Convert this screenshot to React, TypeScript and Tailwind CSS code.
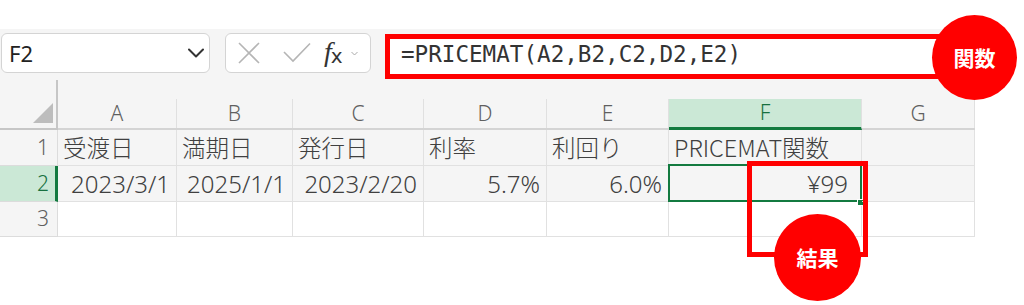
import React from 'react';

const columns = ['A', 'B', 'C', 'D', 'E', 'F', 'G'];

const row1 = ['受渡日', '満期日', '発行日', '利率', '利回り', 'PRICEMAT関数', ''];
const row2 = ['2023/3/1', '2025/1/1', '2023/2/20', '5.7%', '6.0%', '¥99', ''];

const cellFont = { fontFamily: '"Noto Sans CJK JP", "Noto Sans", sans-serif' };
const numFont = { fontFamily: '"Noto Sans", "Noto Sans CJK JP", sans-serif' };

const NameBox = () => (
  <div className="ml-[1px] flex h-[40px] w-[209px] items-center justify-between rounded-[6px] border border-[#d4d4d4] bg-white pl-[7px] pr-[5px]">
    <span className="text-[22px] leading-none text-[#222]" style={{ fontFamily: '"Noto Sans", sans-serif' }}>
      F2
    </span>
    <svg width="16" height="10" viewBox="0 0 16 10" fill="none">
      <path d="M1 1.5L8 8.5L15 1.5" stroke="#333" strokeWidth="2" strokeLinecap="round" strokeLinejoin="round" />
    </svg>
  </div>
);

const FormulaButtons = () => (
  <div className="ml-[15px] flex h-[40px] w-[146px] items-center rounded-[6px] border border-[#d4d4d4] bg-white pl-[12px]">
    <svg width="22" height="22" viewBox="0 0 22 22" fill="none">
      <path d="M1 1L21 21M21 1L1 21" stroke="#b5b5b5" strokeWidth="1.6" />
    </svg>
    <svg className="ml-[23px]" width="28" height="22" viewBox="0 0 28 22" fill="none">
      <path d="M1 10L10 19L27 1.5" stroke="#b5b5b5" strokeWidth="1.6" />
    </svg>
    <span className="ml-[13px] -mt-[2px] flex items-end leading-none text-[#333]" style={{ fontFamily: '"Liberation Serif", serif' }}>
      <span className="text-[28px] italic">f</span>
      <span className="-ml-[1px] text-[20px]" style={{ fontFamily: '"DejaVu Sans", sans-serif' }}>x</span>
    </span>
    <svg className="ml-[8px]" width="7" height="5" viewBox="0 0 7 5" fill="none">
      <path d="M0.5 1L3.5 4L6.5 1" stroke="#aaa" strokeWidth="1" />
    </svg>
  </div>
);

const FormulaBar = () => (
  <div className="ml-[14px] mt-[1px] flex h-[45px] w-[575px] items-center border-[5px] border-[#ff0000] bg-white pl-[11px]">
    <span className="-mt-[4px] text-[22.6px] leading-none text-[#333]" style={{ fontFamily: '"DejaVu Sans Mono", monospace' }}>
      =PRICEMAT(A2,B2,C2,D2,E2)
    </span>
  </div>
);

const Grid = () => (
  <div className="grid grid-cols-[58px_119px_116px_131px_123px_122px_193px_113px] grid-rows-[50px_36px_36px_35px]">
    {/* 全選択 */}
    <div className="flex items-end justify-end border-b-2 border-r-2 border-[#c6c6c6] pb-[5px] pr-[3px]">
      <svg width="20" height="20" viewBox="0 0 20 20">
        <path d="M20 0V20H0Z" fill="#bdbdbd" />
      </svg>
    </div>
    {columns.map((c) => (
      <div key={c} className="flex flex-col border-b-2 border-[#d4d4d4]">
        <div
          className={`mt-[19px] flex h-[29px] items-center justify-center border-r border-[#e0e0e0] text-[21px] font-light leading-none ${
            c === 'F' ? '-mb-[2px] h-[31px] border-b-[3px] border-b-[#137a40] bg-[#cbe8d6] text-[#17703f]' : 'text-[#5f5f5f]'
          }`}
          style={{ fontFamily: '"Noto Sans", sans-serif' }}
        >
          <span className={c === 'F' ? '-mt-[1px]' : ''}>{c}</span>
        </div>
      </div>
    ))}

    {/* 1行目 */}
    <div className="flex items-center justify-end border-b border-r border-[#dcdcdc] pr-[8px] text-[21px] font-light text-[#5f5f5f]" style={{ fontFamily: '"Noto Sans", sans-serif' }}>
      1
    </div>
    {row1.map((v, i) => (
      <div key={i} className="flex items-center whitespace-nowrap border-b border-r border-[#e1e1e1] pl-[5px] text-[23.5px] font-light text-[#404040]" style={cellFont}>
        {v}
      </div>
    ))}

    {/* 2行目 */}
    <div className="flex items-center justify-end border-b border-r-[3px] border-[#dcdcdc] border-r-[#137a40] bg-[#cbe8d6] pr-[6px] text-[21px] font-light text-[#17703f]" style={{ fontFamily: '"Noto Sans", sans-serif' }}>
      2
    </div>
    {row2.map((v, i) => (
      <div
        key={i}
        className={`relative flex items-center justify-end whitespace-nowrap border-b border-r border-[#e1e1e1] text-[24px] font-light text-[#404040] ${i === 5 ? 'pr-[13px]' : 'pr-[6px]'}`}
        style={numFont}
      >
        {v}
        {i === 5 && (
          <>
            <div className="absolute -left-[1px] -top-[2px] bottom-[-1px] right-[-1px] border-[2px] border-[#137a40]" />
            <div className="absolute -bottom-[4px] -right-[2px] h-[5px] w-[5px] bg-[#137a40] outline outline-1 outline-white" />
          </>
        )}
      </div>
    ))}

    {/* 3行目 */}
    <div className="flex items-center justify-end border-b border-r border-[#dcdcdc] pr-[8px] text-[21px] font-light text-[#5f5f5f]" style={{ fontFamily: '"Noto Sans", sans-serif' }}>
      3
    </div>
    {columns.map((c) => (
      <div key={c} className="border-b border-r border-[#e1e1e1] bg-white" />
    ))}
  </div>
);

const Badge = ({ label, className }: { label: string; className: string }) => (
  <div
    className={`absolute flex items-center justify-center rounded-full bg-[#ff0000] text-[21px] font-bold text-white ${className}`}
    style={{ fontFamily: '"Noto Sans CJK JP", sans-serif' }}
  >
    {label}
  </div>
);

export default function App() {
  return (
    <div className="relative h-[305px] w-[1024px] overflow-hidden bg-white">
      <div className="h-[29px]" />
      <div className="w-[975px] bg-[#f5f5f5]">
        <div className="flex h-[51px] items-start pt-[4px]">
          <NameBox />
          <FormulaButtons />
          <FormulaBar />
        </div>
        <Grid />
      </div>

      {/* 注釈 */}
      <div className="absolute left-[747px] top-[161px] h-[96px] w-[121px] border-[5px] border-[#ff0000]" />
      <Badge label="関数" className="left-[932px] top-[15px] h-[85px] w-[85px]" />
      <Badge label="結果" className="left-[774px] top-[214px] h-[87px] w-[87px]" />
    </div>
  );
}
